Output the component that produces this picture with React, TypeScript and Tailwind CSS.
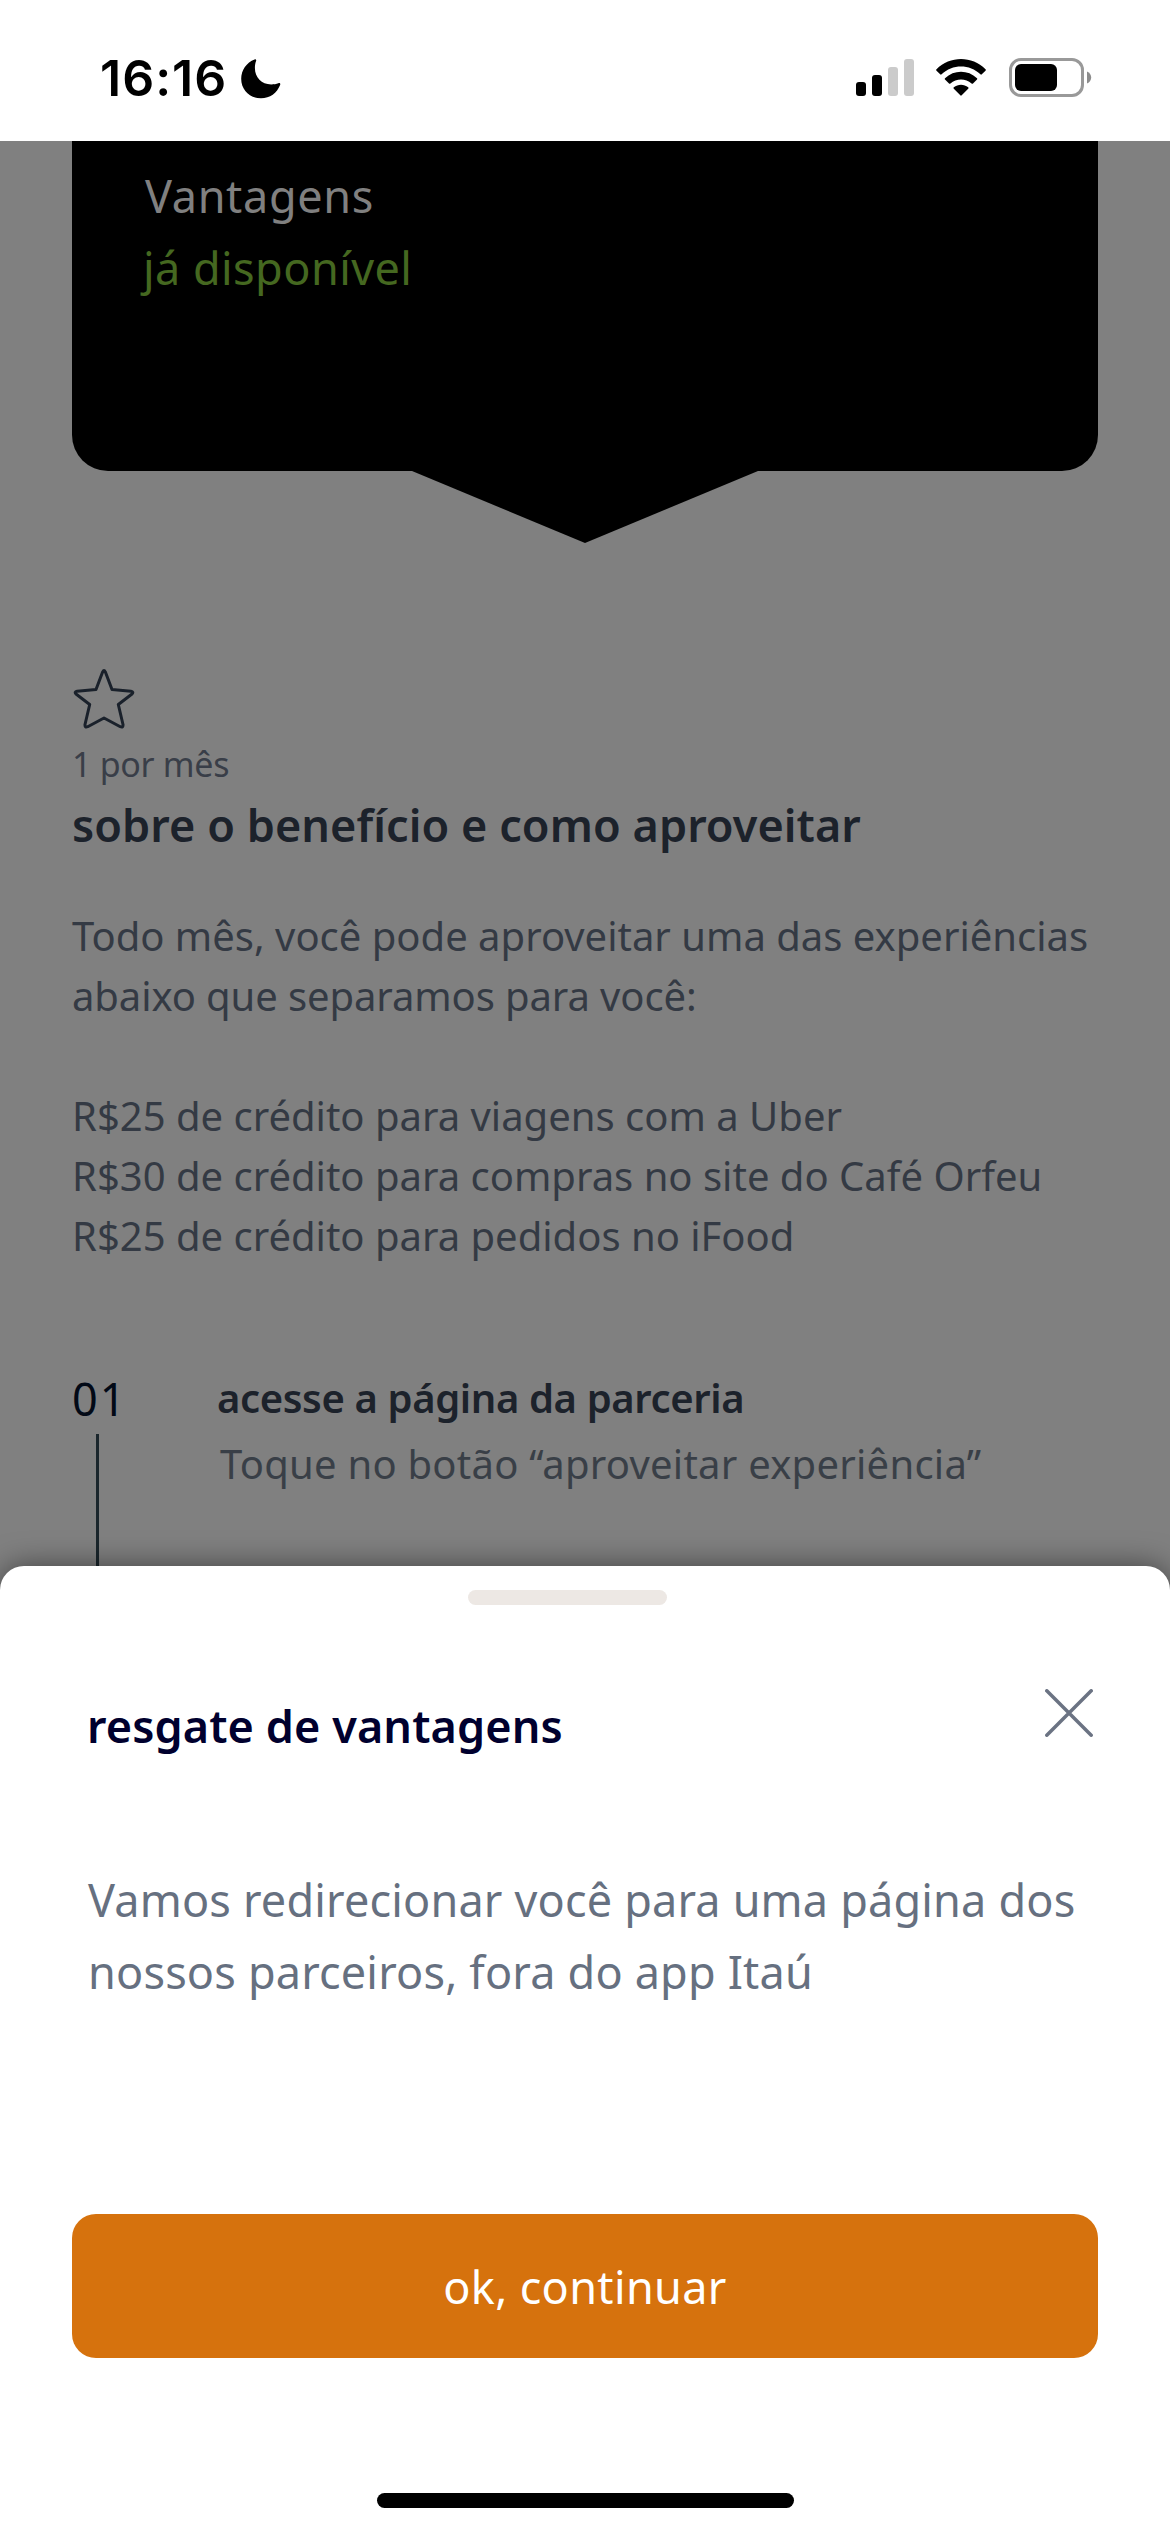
const benefits = [
	"R$25 de crédito para viagens com a Uber",
	"R$30 de crédito para compras no site do Café Orfeu",
	"R$25 de crédito para pedidos no iFood",
];

function StatusBar() {
	return (
		<header className="flex h-[141px] shrink-0 items-start bg-white pl-[100px] pt-[48px]">
			<span className="w-[141px] font-['Inter'] text-[50px] leading-[60px] font-semibold tracking-[1px] whitespace-nowrap text-black">
				16:16
			</span>
			<svg className="mt-[11px] h-[40px] w-[40px]" viewBox="0 0 40 40">
				<path
					d="M13.6 0.4C15 0 15.6 0.9 15 2.2C14.2 4.3 13.9 6.7 13.9 9C13.9 18.5 20.6 25.4 30.2 25.4C33 25.4 35.3 25 37.3 24.2C38.9 23.6 39.7 24.5 39.1 26C36 34 29 39.3 20 39.3C8.7 39.3 0.2 31 0.2 19.8C0.2 11 5.5 3.4 13.6 0.4Z"
					fill="#000"
				/>
			</svg>
			<svg className="mt-[11px] ml-[575px] h-[37px] w-[58px]" viewBox="0 0 58 37">
				<rect x="0" y="23" width="10" height="14" rx="3" fill="#000" />
				<rect x="16" y="16" width="10" height="21" rx="3" fill="#000" />
				<rect x="32" y="8" width="10" height="29" rx="3" fill="#cbcbcb" />
				<rect x="48" y="0" width="10" height="37" rx="3" fill="#cbcbcb" />
			</svg>
			<svg className="mt-[11px] ml-[22px] h-[37px] w-[50px]" viewBox="0 0 50 37">
				<path
					d="M0.5 10.3C14 -3.4 36 -3.4 49.5 10.3Q50.2 11 49.5 11.7L45.8 15.3Q45.1 16 44.4 15.3C33.7 4.9 16.3 4.9 5.6 15.3Q4.9 16 4.2 15.3L0.5 11.7Q-0.2 11 0.5 10.3Z"
					fill="#000"
				/>
				<path
					d="M9 19.2C18 10.6 32 10.6 41 19.2Q41.7 19.9 41 20.6L37 24.5Q36.3 25.2 35.6 24.5C29.6 19 20.4 19 14.4 24.5Q13.7 25.2 13 24.5L9 20.6Q8.3 19.9 9 19.2Z"
					fill="#000"
				/>
				<path
					d="M17.8 28.2C22 24.8 28 24.8 32.2 28.2Q33 28.9 32.2 29.7L25.7 36.3Q25 37 24.3 36.3L17.8 29.7Q17 28.9 17.8 28.2Z"
					fill="#000"
				/>
			</svg>
			<svg className="mt-[10px] ml-[23px] h-[39px] w-[83px]" viewBox="0 0 83 39">
				<rect x="1.5" y="1.5" width="72" height="36" rx="10.5" fill="none" stroke="#999" strokeWidth="3" />
				<rect x="6" y="6" width="42" height="27" rx="6" fill="#000" />
				<path d="M78 13.5C80.7 14.7 82.2 17 82.2 19.5S80.7 24.3 78 25.5Z" fill="#8c8c8c" />
			</svg>
		</header>
	);
}

function PartnerCard() {
	return (
		<div className="flex flex-col items-center">
			<div className="h-[330px] w-full rounded-b-[36px] bg-black pt-[19px] pl-[72px] text-[45px] leading-[72px]">
				<p className="pl-px tracking-[0.65px] text-[#808080]">Vantagens</p>
				<p className="-ml-px tracking-[0.45px] text-[#456820]">já disponível</p>
			</div>
			<svg className="-mt-px h-[73px] w-[346px]" viewBox="0 0 346 73">
				<path d="M0 0H346V1L173 73L0 1Z" fill="#000" />
			</svg>
		</div>
	);
}

function Star() {
	return (
		<svg
			className="mt-[126px] h-[60px] w-[64px]"
			viewBox="0 0 64 60"
			fill="none"
			stroke="#1a212b"
			strokeWidth="3"
			strokeLinejoin="round"
		>
			<path d="M30.7 2.8Q32 0.2 33.3 2.8L40 20.5L59 22.3Q62 22.8 60 25L46.3 35.5L51 55.5Q51.3 59 48.3 57.7L32 49L15.7 57.7Q12.7 59 13 55.5L17.7 35.5L4 25Q2 22.8 5 22.3L24 20.5Z" />
		</svg>
	);
}

export default function App() {
	return (
		<div className="flex h-[2532px] w-[1170px] flex-col overflow-hidden bg-[#808080] font-['Noto_Sans',sans-serif]">
			<StatusBar />

			<main className="h-[1425px] shrink-0 px-[72px]">
				<PartnerCard />
				<Star />
				<p className="mt-[11px] text-[34px] leading-[48px] tracking-[-0.3px] text-[#393e48]">1 por mês</p>
				<h1 className="mt-[7px] text-[45px] leading-[60px] font-semibold tracking-[0.06px] text-[#1c222b]">
					sobre o benefício e como aproveitar
				</h1>
				<div className="mt-[51px] text-[40px] leading-[60px] whitespace-nowrap text-[#343a44]">
					<p>Todo mês, você pode aproveitar uma das experiências</p>
					<p className="tracking-[-0.1px]">abaixo que separamos para você:</p>
					<ul className="mt-[60px]">
						{benefits.map((benefit) => (
							<li key={benefit}>{benefit}</li>
						))}
					</ul>
				</div>

				<div className="mt-[102px] flex">
					<div className="w-[145px] pt-[4px]">
						<p className="text-[45px] leading-[54px] tracking-[2px] text-[#020916]">01</p>
						<div className="mt-[8px] ml-[24px] h-[132px] w-[3px] bg-[#1a262c]" />
					</div>
					<div>
						<h2 className="text-[40px] leading-[60px] font-semibold tracking-[-0.38px] text-[#1c222b]">
							acesse a página da parceria
						</h2>
						<p className="mt-[6px] ml-[3px] text-[40px] leading-[60px] tracking-[0.25px] text-[#393f47]">
							Toque no botão “aproveitar experiência”
						</p>
					</div>
				</div>
			</main>

			{/* Bottom sheet */}
			<section className="relative flex grow flex-col rounded-t-[24px] bg-white px-[72px] pt-[24px] shadow-[0_0_30px_rgba(0,0,0,0.5)]">
				<div className="ml-[396px] h-[15px] w-[199px] rounded-full bg-[#ede8e4]" />
				<div className="mt-[84px] flex items-start justify-between pr-[5px] pl-[15px]">
					<h2 className="mt-[7px] text-[45px] leading-[60px] font-semibold tracking-[0.1px] text-[#00002e]">
						resgate de vantagens
					</h2>
					<svg className="h-[48px] w-[48px]" viewBox="0 0 48 48" stroke="#6b7383" strokeWidth="3.5" strokeLinecap="round">
						<path d="M1.8 1.8L46.2 46.2M46.2 1.8L1.8 46.2" />
					</svg>
				</div>
				<p className="mt-[108px] pl-[16px] text-[45px] leading-[72px] tracking-[0.18px] whitespace-nowrap text-[#667080]">
					Vamos redirecionar você para uma página dos
					<br />
					nossos parceiros, fora do app Itaú
				</p>
				<button className="mt-[206px] h-[144px] w-full rounded-[24px] bg-[#d6720d] pt-px text-[45px] tracking-[0.35px] text-white">
					ok, continuar
				</button>
				<div className="mt-[135px] h-[15px] w-[417px] self-center rounded-full bg-black" />
			</section>
		</div>
	);
}
